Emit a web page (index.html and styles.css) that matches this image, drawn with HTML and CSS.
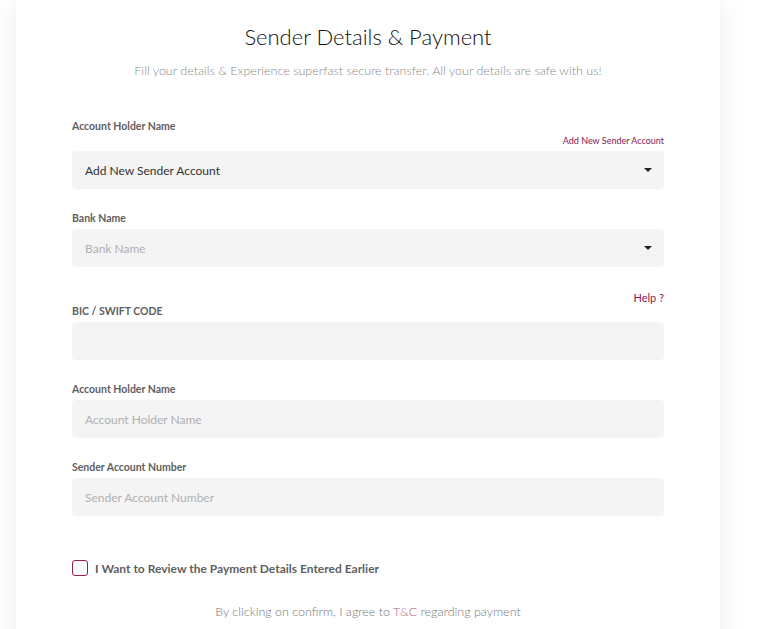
FILE: index.html
```html
<!DOCTYPE html>
<html lang="en">
<head>
<meta charset="utf-8">
<title>Sender Details & Payment</title>
<link rel="stylesheet" href="styles.css">
</head>
<body>
<div class="page">
  <div class="card">
    <h1 class="title">Sender Details &amp; Payment</h1>
    <p class="subtitle">Fill your details &amp; Experience superfast secure transfer. All your details are safe with us!</p>

    <div class="field first">
      <div class="label">Account Holder Name</div>
      <div class="aside-link small">Add New Sender Account</div>
      <div class="box select"><span class="value">Add New Sender Account</span><span class="caret"></span></div>
    </div>

    <div class="field">
      <div class="label">Bank Name</div>
      <div class="box select"><span class="placeholder">Bank Name</span><span class="caret"></span></div>
    </div>

    <div class="field help-field">
      <div class="aside-link help">Help ?</div>
      <div class="label">BIC / SWIFT CODE</div>
      <div class="box"></div>
    </div>

    <div class="field">
      <div class="label">Account Holder Name</div>
      <div class="box"><span class="placeholder">Account Holder Name</span></div>
    </div>

    <div class="field">
      <div class="label">Sender Account Number</div>
      <div class="box"><span class="placeholder">Sender Account Number</span></div>
    </div>

    <label class="check">
      <span class="checkbox"></span>
      <span class="check-text">I Want to Review the Payment Details Entered Earlier</span>
    </label>

    <p class="terms">By clicking on confirm, I agree to <span class="tc">T&amp;C</span> regarding payment</p>
  </div>
</div>
</body>
</html>
```

FILE: styles.css
```css
* { box-sizing: border-box; }
html, body { margin: 0; padding: 0; background: #ffffff; }
body { font-family: Lato, "Open Sans", sans-serif; overflow: hidden; }

.page { padding: 0 16px; }

.card {
  width: 704px;
  background: #fff;
  box-shadow: 0 0 28px rgba(0, 0, 0, 0.07);
  padding: 22px 56px 40px;
  min-height: 660px;
}

.title {
  margin: 0;
  text-align: center;
  font-weight: 300;
  font-size: 22px;
  line-height: 30px;
  color: #111;
}

.subtitle {
  margin: 11px 0 0;
  text-align: center;
  font-weight: 300;
  font-size: 12.5px;
  line-height: 16px;
  color: #8a8a8a;
}

.field { display: flex; flex-direction: column; margin-top: 22px; }
.field.first { margin-top: 40px; }
.field.help-field { margin-top: 24px; }

.label {
  font-size: 10.5px;
  line-height: 14px;
  font-weight: 700;
  color: #606060;
  margin-bottom: 4px;
}
.field.first .label { margin-bottom: 2px; }

.aside-link { align-self: flex-end; color: #861a50; }
.aside-link.small { font-size: 9px; line-height: 12px; margin-bottom: 4px; }
.aside-link.help { font-size: 11px; line-height: 14px; margin-bottom: -1px; }

.box {
  height: 38px;
  background: #f4f4f4;
  border-radius: 4px;
  display: flex;
  align-items: center;
  justify-content: space-between;
  padding: 0 12px 0 13px;
  font-size: 12px;
}
.value { color: #333; }
.placeholder { color: #b0b0b0; }
.caret {
  width: 0; height: 0;
  border-left: 4px solid transparent;
  border-right: 4px solid transparent;
  border-top: 4px solid #222;
}

.check {
  display: flex;
  align-items: center;
  gap: 7px;
  margin-top: 44px;
}
.checkbox {
  width: 16px; height: 16px;
  border: 1.5px solid #9b1a4f;
  border-radius: 3px;
}
.check-text {
  font-size: 12px;
  font-weight: 700;
  color: #5f5f5f;
}

.terms {
  margin: 28px 0 0;
  text-align: center;
  font-size: 12.5px;
  font-weight: 300;
  color: #777;
}
.tc { color: #b0607f; }
```
